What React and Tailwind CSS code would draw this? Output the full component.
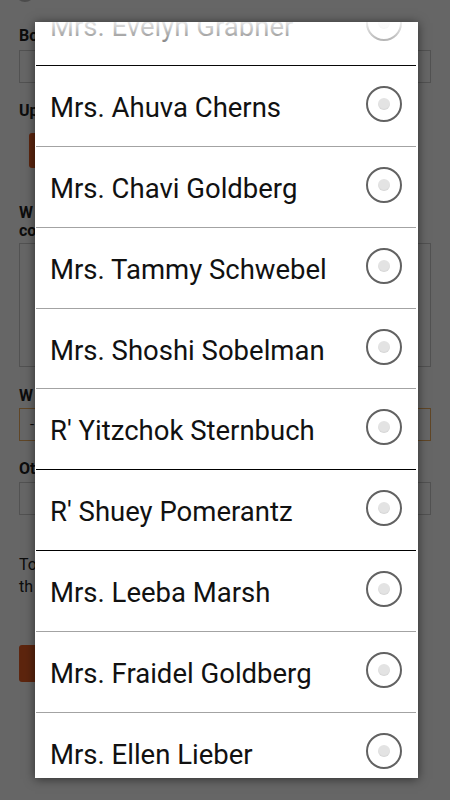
import React from "react";

const people = [
  { name: "Mrs. Evelyn Grabner", h: "h-[80px]", line: "bg-black" },
  { name: "Mrs. Ahuva Cherns", h: "h-[80px]", line: "bg-[#a3a3a3]" },
  { name: "Mrs. Chavi Goldberg", h: "h-[80px]", line: "bg-[#a3a3a3]" },
  { name: "Mrs. Tammy Schwebel", h: "h-[80px]", line: "bg-[#a3a3a3]" },
  { name: "Mrs. Shoshi Sobelman", h: "h-[79px]", line: "bg-[#a3a3a3]" },
  { name: "R' Yitzchok Sternbuch", h: "h-[80px]", line: "bg-black" },
  { name: "R' Shuey Pomerantz", h: "h-[80px]", line: "bg-black" },
  { name: "Mrs. Leeba Marsh", h: "h-[80px]", line: "bg-[#a3a3a3]" },
  { name: "Mrs. Fraidel Goldberg", h: "h-[80px]", line: "bg-[#a3a3a3]" },
  { name: "Mrs. Ellen Lieber", h: "h-[80px]", line: "bg-[#a3a3a3]" },
];

function Radio() {
  return (
    <div className="mb-[4px] flex h-[36px] w-[36px] shrink-0 items-center justify-center rounded-full border-2 border-[#626262] bg-white">
      <div className="h-[12px] w-[12px] rounded-full bg-[#e3e3e3] shadow-[inset_0_-1px_1px_rgba(0,0,0,0.06)]" />
    </div>
  );
}

function Label({ children }) {
  return (
    <div className="text-[16px] font-bold leading-[18px] text-[#222] whitespace-nowrap">
      {children}
    </div>
  );
}

export default function App() {
  return (
    <div className="relative h-[800px] w-[450px] overflow-hidden bg-white font-[Roboto,sans-serif]">
      {/* underlying page */}
      <div className="flex flex-col px-[19px]">
        <div className="-mt-[18px] ml-[-4px] h-[20px] w-[20px] rounded-full border-2 border-[#bbb]" />
        <div className="mt-[25px]">
          <Label>Bo</Label>
        </div>
        <div className="mt-[5px] h-[33px] w-full border border-[#ccc] bg-white" />
        <div className="mt-[19px]">
          <Label>Up</Label>
        </div>
        <div className="ml-[10px] mt-[13px] h-[35px] w-[140px] rounded-[3px] bg-[#e85c24]" />
        <div className="mt-[36px]">
          <Label>
            W
            <br />
            co
          </Label>
        </div>
        <div className="mt-[3px] h-[124px] w-full border border-[#ccc] bg-white" />
        <div className="mt-[20px]">
          <Label>W</Label>
        </div>
        <div className="mt-[3px] flex h-[33px] w-full items-center border border-[#f0b060] bg-white pl-[10px] text-[15px] text-[#222]">
          -
        </div>
        <div className="mt-[19px]">
          <Label>Ot</Label>
        </div>
        <div className="mt-[4px] h-[33px] w-full border border-[#ccc] bg-white" />
        <div className="mt-[39px] text-[16px] leading-[22px] text-[#222] whitespace-nowrap">
          To
          <br />
          th
        </div>
        <div className="mt-[47px] h-[37px] w-[160px] rounded-[3px] bg-[#e85c24]" />
      </div>

      {/* dim overlay */}
      <div className="absolute inset-0 bg-black/60" />

      {/* dialog */}
      <div className="absolute inset-0 flex items-start pl-[35px] pt-[22px]">
        <div className="relative h-[756px] w-[383px] overflow-hidden bg-white shadow-[0_1px_10px_rgba(0,0,0,0.55)]">
          <div className="-mt-[37px] flex flex-col">
            {people.map((p) => (
              <div key={p.name} className="flex flex-col">
                <div className={`flex ${p.h} items-center justify-between pl-[15px] pr-[16px]`}>
                  <span className="pt-[4px] text-[27.5px] text-[#111] whitespace-nowrap">
                    {p.name}
                  </span>
                  <Radio />
                </div>
                <div className={`ml-[1px] mr-[2px] h-px ${p.line}`} />
              </div>
            ))}
          </div>
          {/* top fading edge */}
          <div className="pointer-events-none absolute left-0 right-0 top-0 h-[45px] bg-gradient-to-b from-white/90 to-white/0" />
        </div>
      </div>
    </div>
  );
}
